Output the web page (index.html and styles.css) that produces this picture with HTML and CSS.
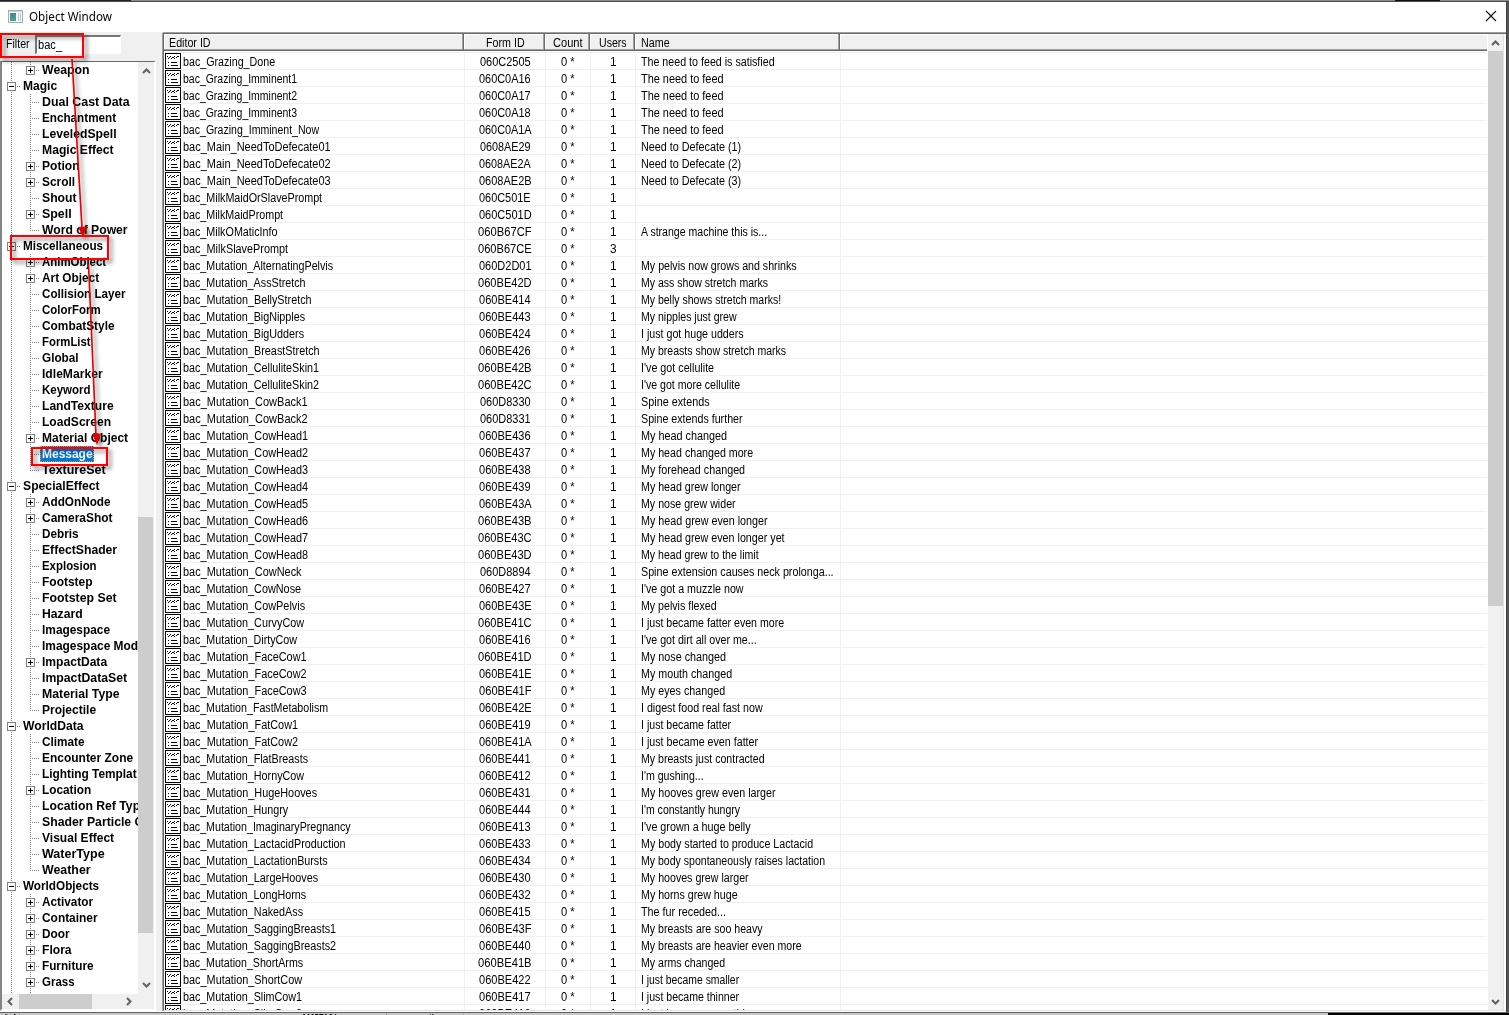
FILE: index.html
```html
<!DOCTYPE html>
<html lang="en">
<head>
<meta charset="utf-8">
<title>Object Window</title>
<link rel="stylesheet" href="styles.css">
</head>
<body>
<div class="desktop-top"><i class="dark-left"></i><i class="dark-right"></i></div>
<main class="window">
  <header class="titlebar">
    <svg class="app-icon" width="16" height="14" viewBox="0 0 16 14"><defs><linearGradient id="g" x2="0" y2="1"><stop stop-color="#4a7fa5"/><stop offset="1" stop-color="#4ba57a"/></linearGradient></defs><rect x=".5" y=".5" width="14" height="12" fill="#f4f6f7" stroke="#a3adb4"/><path d="M1 1.5h13" stroke="#ccd3d8"/><rect x="2" y="3" width="6" height="8" fill="url(#g)"/><path d="M10.5 3v8M12.5 3v8" stroke="#bccbd2"/></svg>
    <h1 class="title">Object Window</h1>
    <svg class="close" width="12" height="12" viewBox="0 0 12 12"><path d="M1 1l10 10M11 1L1 11" stroke="#111" stroke-width="1.1"/></svg>
  </header>
  <div class="body">
    <aside class="side">
      <div class="filter"><label class="ms">Filter</label><div class="input"><span class="ms">bac_</span></div></div>
      <div class="tree-frame">
        <div class="tree" id="tree"></div>
        <div class="vscroll tree-v"><svg width="9" height="6"><path d="M1 5l3.500-3.500L8 5"/></svg><i class="thumb"></i><svg width="9" height="6"><path d="M1 1l3.500 3.500L8 1"/></svg></div>
        <div class="hscroll"><svg width="6" height="9"><path d="M5 1L1.500 4.500 5 8"/></svg><i class="thumb"></i><svg width="6" height="9"><path d="M1 1l3.500 3.500L1 8"/></svg></div>
        <div class="corner"></div>
      </div>
    </aside>
    <section class="list-frame">
      <div class="list">
        <div class="head"><div><span class="ms">Editor ID</span></div><div class="mid"><span class="ms">Form ID</span></div><div class="mid"><span class="ms">Count</span></div><div class="mid"><span class="ms">Users</span></div><div class="name-head"><span class="ms">Name</span></div><div class="rest"></div></div>
        <div class="rows" id="rows"></div>
      </div>
      <div class="vscroll list-v"><svg width="9" height="6"><path d="M1 5l3.500-3.500L8 5"/></svg><i class="thumb"></i><svg width="9" height="6"><path d="M1 1l3.500 3.500L8 1"/></svg></div>
    </section>
  </div>
</main>
<div class="desktop-bottom"><div class="behind"><span class="ms">BladesFaction</span><span class="ms">0007E8C1</span><span class="ms">0</span><span class="ms">12</span><span class="ms">Blades</span></div></div>
<svg class="notes" width="170" height="480" viewBox="0 0 170 480">
  <g class="note-shapes">
    <rect x="1" y="34" width="82" height="23"/>
    <rect x="11" y="236" width="97" height="23"/>
    <rect x="32" y="448" width="75" height="17"/>
    <path d="M72 59L82 228M88.500 264L96 436" class="shaft"/>
    <path d="M78 227l9-.5L83 237zM92 434l9-.5L97 445z" class="tip"/>
  </g>
</svg>
<svg width="0" height="0" class="defs"><symbol id="msg" viewBox="0 0 16 16"><rect x=".5" y=".5" width="15" height="15" fill="#fff" stroke="#000"/><path d="M2 3.500h1M4 4.500h1M5 3.500h1M7 4.500h2M9 3.500h1M11 4.500h1M12 3.500h2M3 5.500h1M6 5.500h1M9 5.500h1M3 9.500h1M6 9.500h6M3 12.500h1M6 12.500h7" stroke="#000"/></symbol></svg>
<script src="app.js"></script>
</body>
</html>
```
FILE: styles.css
```css
* { box-sizing: border-box; }
body { margin: 0; width: 1509px; height: 1015px; overflow: hidden; background: #555; display: flex; flex-direction: column; font: 12px/16px "Liberation Sans", sans-serif; color: #000; position: relative; }
i { display: block; }
.ms { display: inline-block; white-space: pre; transform-origin: 0 50%; font-size: 12.3px; }
.defs { position: absolute; }
.desktop-top { height: 2px; flex: none; background: #8a8a8a; border-bottom: 1px solid #4b4b4b; display: flex; justify-content: space-between; padding-right: 69px; }
.dark-left { width: 131px; background: #222; }
.dark-right { width: 45px; background: #111; }
.window { height: 1010px; flex: none; width: 1507px; background: #fff; border-right: 1px solid #414141; display: flex; flex-direction: column; }
.titlebar { height: 30px; display: flex; align-items: center; padding: 0 9px 0 8px; flex: none; }
.title { font: 12px/16px "Noto Sans", sans-serif; margin: 0 0 0 5px; flex: 1; }
.title span { display: inline-block; white-space: pre; transform-origin: 0 50%; }
.app-icon { flex: none; }
.close { margin-top: -2px; }
.body { flex: 1; display: flex; min-height: 0; background: #f0f0f0; border-bottom: 1px solid #fff; }
.side { width: 162px; flex: none; display: flex; flex-direction: column; }
.filter { height: 29px; display: flex; align-items: flex-start; padding: 3px 0 0 6px; }
.filter label { line-height: 18px; }
.input { width: 86px; height: 19px; background: #fff; border: 1px solid #fff; border-top: 2px solid #777; border-left: 2px solid #777; padding: 0 1px; margin-left: auto; margin-right: 41px; line-height: 17px; }
.tree-frame { width: 156px; flex: 1; min-height: 0; display: grid; grid-template: minmax(0,1fr) 15px / 136px 16px; border: 2px solid #fff; border-top: 1px solid #696969; border-left: 2px solid #858585; background: #f0f0f0; }
.tree { background: #fff; overflow: hidden; }
.node { height: 16px; display: flex; align-items: center; font-weight: bold; white-space: nowrap; }
.node .ms { font-size: 12px; }
.gut { width: 19px; height: 16px; flex: none; background: repeating-linear-gradient(#808080 0 1px, transparent 1px 2px) 9px 0 / 1px 16px no-repeat; }
.arm { height: 16px; flex: none; width: 19px; display: grid; place-items: center start; padding-left: 5px; background: repeating-linear-gradient(90deg, #808080 0 1px, transparent 1px 2px) 9px 8px / 9px 1px no-repeat, repeating-linear-gradient(#808080 0 1px, transparent 1px 2px) 9px 0 / 1px 16px no-repeat; }
.arm.last { background-size: 9px 1px, 1px 9px; }
.arm.stub { background-size: 0 0, 1px 9px; }
.box { width: 9px; height: 9px; border: 1px solid #808080; background: linear-gradient(#000,#000) 1px 3px / 5px 1px no-repeat, #fff; }
.box.plus { background: linear-gradient(#000,#000) 1px 3px / 5px 1px no-repeat, linear-gradient(#000,#000) 3px 1px / 1px 5px no-repeat, #fff; }
.label { padding: 0 1px 0 2px; height: 16px; line-height: 16px; }
.selected { background: #0078d7; color: #fff; outline: 1px dotted #ff8728; outline-offset: -1px; }
.vscroll, .hscroll { background: #f0f0f0; display: flex; align-items: center; }
.vscroll { flex-direction: column; }
svg path { fill: none; }
.vscroll svg path, .hscroll svg path { stroke: #606060; stroke-width: 2; }
.thumb { background: #cdcdcd; flex: none; }
.vscroll svg, .hscroll svg { flex: none; }
.vscroll svg:last-child, .hscroll svg:last-child { margin-top: auto; }
.tree-v { padding: 6px 0 6px; }
.tree-v .thumb { width: 15px; height: 416px; margin-top: 443px; align-self: flex-start; }
.hscroll { padding: 0 6px 0 5px; }
.hscroll .thumb { width: 73px; height: 15px; margin-left: 6px; }
.hscroll svg:last-child { margin: 0 0 0 auto; }
.list-frame { flex: 1; min-width: 0; display: flex; border: solid #696969; border-width: 1px 0 0 1px; outline: 0; margin: 1px 0 0 0; box-shadow: 0 -1px #a0a0a0, -1px 0 #a0a0a0; border-bottom: 1px solid #e3e3e3; background: #fff; }
.list-frame { margin-left: 1px; }
.list { width: 1323px; display: flex; flex-direction: column; flex: none; }
.head { height: 17px; flex: none; display: grid; grid-template-columns: 300px 81px 45px 45px 205px 1fr; }
.head div { background: #f0f0f0; border-right: 1px solid #696969; border-bottom: 1px solid #696969; box-shadow: inset -1px -1px #a0a0a0, inset 1px 1px #fff; padding-left: 5px; line-height: 19px; height: 17px; }
.head .mid { padding: 0 0 0 2px; text-align: center; }
.head .name-head { padding-left: 6px; }
.head .rest { border-right: 0; box-shadow: inset 0 -1px #a0a0a0, inset 1px 1px #fff; }
.rows { flex: 1; min-height: 0; overflow: hidden; margin-top: 1px; border-top: 1px solid #f0f0f0; }
.row { height: 17px; display: grid; grid-template-columns: 301px 81px 45px 45px 205px 1fr; border-bottom: 1px solid #f0f0f0; line-height: 18px; }
.row > div { border-right: 1px solid #f0f0f0; height: 17px; white-space: nowrap; }
.row > div:last-child { border: 0; }
.row .mid { text-align: center; }
.row .name { padding-left: 5px; }
.row .id { display: flex; padding-left: 1px; gap: 2px; }
.row .id svg { width: 16px; height: 16px; flex: none; }
.list-v { width: 15px; margin-left: 1px; padding: 6px 0 5px; }
.list-v .thumb { width: 15px; height: 555px; margin-top: 5px; }
.list-frame::after { content: ""; width: 1px; background: #e3e3e3; }
.desktop-bottom { height: 3px; flex: none; background: #000; overflow: hidden; border-top: 1px solid #606060; }
.behind { width: 1328px; height: 2px; overflow: hidden; background: #c8c8c8; display: grid; grid-template-columns: 297px 84px 43px 34px 1fr; padding-left: 5px; align-items: end; line-height: 8px; }
.behind .ms { margin-bottom: -1px; line-height: 12px; }
.notes { position: absolute; left: 0; top: 0; overflow: visible; }
.note-shapes { filter: drop-shadow(3px 3px 2px rgba(0,0,0,.55)); }
.note-shapes rect { fill: none; stroke: #f00; stroke-width: 2; }
.shaft { stroke: #e30000; stroke-width: 1.6; }
.note-shapes .tip { fill: #e30000; }
```
FILE: app.js
```js
// Advance widths of the 8pt dialog font; bold adds one pixel per glyph.
const ADV = {};
const put = (chars, w) => { for (const c of chars) ADV[c] = w; };
put('abdeghnopquvk_0123456789', 6); put('c', 5.5); put('sxyz', 5); put("ilj'", 2);
put('rtf .I()!', 3); put('mw', 8); put('BCDGHNOPQRSU', 8); put('AEFKTVXYZ', 7);
put('L', 6); put('J', 5); put('M', 9); put('W', 11); put('*', 4);
const ms = t => `<span class="ms">${t}</span>`;

// Depth marker: "-" open root, "+" expandable child, " " plain child.
const tree = `+Weapon
-Magic
 Dual Cast Data
 Enchantment
 LeveledSpell
 Magic Effect
+Potion
+Scroll
 Shout
+Spell
 Word of Power
-Miscellaneous
+AnimObject
+Art Object
 Collision Layer
 ColorForm
 CombatStyle
 FormList
 Global
 IdleMarker
 Keyword
 LandTexture
 LoadScreen
+Material Object
 Message
 TextureSet
-SpecialEffect
+AddOnNode
+CameraShot
 Debris
 EffectShader
 Explosion
 Footstep
 Footstep Set
 Hazard
 Imagespace
 Imagespace Mod
+ImpactData
 ImpactDataSet
 Material Type
 Projectile
-WorldData
 Climate
 Encounter Zone
 Lighting Templat
+Location
 Location Ref Typ
 Shader Particle G
 Visual Effect
 WaterType
 Weather
-WorldObjects
+Activator
+Container
+Door
+Flora
+Furniture
+Grass`.split('\n');
document.getElementById('tree').innerHTML = tree.map((line, i) => {
  const kind = line[0], name = line.slice(1);
  const label = `<span class="label${name === 'Message' ? ' selected' : ''}">${ms(name)}</span>`;
  if (kind === '-') return `<div class="node"><span class="arm"><i class="box"></i></span>${label}</div>`;
  const last = tree[i + 1] && tree[i + 1][0] === '-' ? ' last' : '';
  return `<div class="node"><span class="gut"></span><span class="arm${last}">${kind === '+' ? '<i class="box plus"></i>' : ''}</span>${label}</div>`;
}).join('') + '<div class="node"><span class="gut"></span><span class="arm stub"></span></div>';

const M = 'Mutation_';
const rows = `Grazing_Done|C2505|The need to feed is satisfied
Grazing_Imminent1|C0A16|The need to feed
Grazing_Imminent2|C0A17|The need to feed
Grazing_Imminent3|C0A18|The need to feed
Grazing_Imminent_Now|C0A1A|The need to feed
Main_NeedToDefecate01|8AE29|Need to Defecate (1)
Main_NeedToDefecate02|8AE2A|Need to Defecate (2)
Main_NeedToDefecate03|8AE2B|Need to Defecate (3)
MilkMaidOrSlavePrompt|C501E|
MilkMaidPrompt|C501D|
MilkOMaticInfo|B67CF|A strange machine this is...
MilkSlavePrompt|B67CE|
~AlternatingPelvis|D2D01|My pelvis now grows and shrinks
~AssStretch|BE42D|My ass show stretch marks
~BellyStretch|BE414|My belly shows stretch marks!
~BigNipples|BE443|My nipples just grew
~BigUdders|BE424|I just got huge udders
~BreastStretch|BE426|My breasts show stretch marks
~CelluliteSkin1|BE42B|I've got cellulite
~CelluliteSkin2|BE42C|I've got more cellulite
~CowBack1|D8330|Spine extends
~CowBack2|D8331|Spine extends further
~CowHead1|BE436|My head changed
~CowHead2|BE437|My head changed more
~CowHead3|BE438|My forehead changed
~CowHead4|BE439|My head grew longer
~CowHead5|BE43A|My nose grew wider
~CowHead6|BE43B|My head grew even longer
~CowHead7|BE43C|My head grew even longer yet
~CowHead8|BE43D|My head grew to the limit
~CowNeck|D8894|Spine extension causes neck prolonga...
~CowNose|BE427|I've got a muzzle now
~CowPelvis|BE43E|My pelvis flexed
~CurvyCow|BE41C|I just became fatter even more
~DirtyCow|BE416|I've got dirt all over me...
~FaceCow1|BE41D|My nose changed
~FaceCow2|BE41E|My mouth changed
~FaceCow3|BE41F|My eyes changed
~FastMetabolism|BE42E|I digest food real fast now
~FatCow1|BE419|I just became fatter
~FatCow2|BE41A|I just became even fatter
~FlatBreasts|BE441|My breasts just contracted
~HornyCow|BE412|I'm gushing...
~HugeHooves|BE431|My hooves grew even larger
~Hungry|BE444|I'm constantly hungry
~ImaginaryPregnancy|BE413|I've grown a huge belly
~LactacidProduction|BE433|My body started to produce Lactacid
~LactationBursts|BE434|My body spontaneously raises lactation
~LargeHooves|BE430|My hooves grew larger
~LongHorns|BE432|My horns grew huge
~NakedAss|BE415|The fur receded...
~SaggingBreasts1|BE43F|My breasts are soo heavy
~SaggingBreasts2|BE440|My breasts are heavier even more
~ShortArms|BE41B|My arms changed
~ShortCow|BE422|I just became smaller
~SlimCow1|BE417|I just became thinner
~SlimCow2|BE418|I just became even thinner`.split('\n');
document.getElementById('rows').innerHTML = rows.map(r => {
  const [id, form, name] = r.split('|');
  const users = id === 'MilkSlavePrompt' ? '3' : '1';
  return `<div class="row"><div class="id"><svg><use href="#msg"/></svg>${ms('bac_' + id.replace('~', M))}</div><div class="mid">${ms('060' + form)}</div><div class="mid">${ms('0 *')}</div><div class="mid">${ms(users)}</div><div class="name">${ms(name)}</div><div></div></div>`;
}).join('');

// Condense each label to its dialog-font width.
function fit(el, target) {
  const natural = el.getBoundingClientRect().width;
  if (!natural) return;
  el.style.transform = `scaleX(${target / natural})`;
  el.style.marginRight = `${target - natural}px`;
}
const jobs = [...document.querySelectorAll('.ms')].map(el => {
  const extra = el.closest('.node') ? 1 : 0;
  return [el, [...el.textContent].reduce((s, c) => s + (ADV[c] || 6) + extra, 0.6)];
});
jobs.forEach(([el, w]) => fit(el, w));
const title = document.querySelector('.title');
title.innerHTML = `<span>${title.textContent}</span>`;
fit(title.firstChild, 83);
```
